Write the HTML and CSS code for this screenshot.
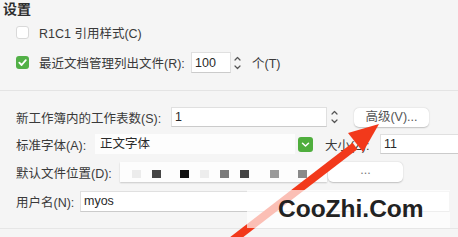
FILE: index.html
```html
<!DOCTYPE html>
<html lang="zh-CN">
<head>
<meta charset="utf-8">
<title>设置</title>
<link rel="stylesheet" href="styles.css">
</head>
<body>
<div class="page">
  <div class="title">设置</div>

  <div class="row r1">
    <span class="cb"></span>
    <span class="text">R1C1 引用样式(C)</span>
  </div>

  <div class="row r2">
    <span class="cb on"><svg viewBox="0 0 13 13" width="13" height="13"><path d="M3.3 6.7 L5.6 9 L9.8 4.2" fill="none" stroke="#fff" stroke-width="1.8" stroke-linecap="round" stroke-linejoin="round"/></svg></span>
    <span class="label l-recent">最近文档管理列出文件(R):</span>
    <span class="field f-recent">100</span>
    <span class="stepper"><svg viewBox="0 0 9 20" width="9" height="20"><path d="M2 7 L4.5 4.5 L7 7 M2 13 L4.5 15.5 L7 13" fill="none" stroke="#555" stroke-width="1.2" stroke-linecap="round" stroke-linejoin="round"/></svg></span>
    <span class="unit">个(T)</span>
  </div>

  <div class="divider"></div>

  <div class="row r3">
    <span class="label l-sheets">新工作簿内的工作表数(S):</span>
    <span class="field f-sheets">1</span>
    <span class="stepper s-sheets"><svg viewBox="0 0 9 20" width="9" height="20"><path d="M2 7 L4.5 4.5 L7 7 M2 13 L4.5 15.5 L7 13" fill="none" stroke="#555" stroke-width="1.2" stroke-linecap="round" stroke-linejoin="round"/></svg></span>
    <span class="btn b-adv">高级(V)...</span>
  </div>

  <div class="row r4">
    <span class="label l-font">标准字体(A):</span>
    <span class="select">正文字体</span>
    <span class="drop"><svg viewBox="0 0 15 15" width="15" height="15"><path d="M4.5 6.2 L7.5 9 L10.5 6.2" fill="none" stroke="#fff" stroke-width="1.5" stroke-linecap="round" stroke-linejoin="round"/></svg></span>
    <span class="label l-size">大小(Z):</span>
    <span class="field f-size">11</span>
  </div>

  <div class="row r5">
    <span class="label l-path">默认文件位置(D):</span>
    <span class="path">
      <span class="sq c1"></span><span class="sq c2"></span><span class="sq c3"></span><span class="sq c4"></span><span class="sq c5"></span><span class="sq c6"></span><span class="sq c7"></span><span class="sq c8"></span>
    </span>
    <span class="btn b-dots">...</span>
  </div>

  <div class="row r6">
    <span class="label l-user">用户名(N):</span>
    <span class="field f-user">myos</span>
  </div>

  <div class="bottom"></div>
</div>

<svg class="arrow" viewBox="0 0 458 237" width="458" height="237">
  <path d="M229 243 L355 146" stroke="#f2391b" stroke-width="8" fill="none"/>
  <polygon points="379,124 348,133 363,152" fill="#f2391b"/>
</svg>

<div class="watermark">CooZhi.Com</div>
</body>
</html>
```

FILE: styles.css
```css
html, body {
  margin: 0;
  padding: 0;
}
body {
  width: 458px;
  height: 237px;
  overflow: hidden;
  background: #f5f5f5;
  font-family: "Liberation Sans", "Noto Sans CJK SC", sans-serif;
  font-size: 12.5px;
  color: #3a3a3a;
  position: relative;
}
.page {
  display: flex;
  flex-direction: column;
}
.title {
  height: 18px;
  line-height: 18px;
  margin-left: 3px;
  font-size: 14px;
  font-weight: bold;
  color: #2e2e2e;
}
.row {
  display: flex;
  align-items: center;
  padding-left: 16px;
  height: 20px;
  white-space: nowrap;
}
.r1 { margin-top: 5px; height: 18px; }
.r2 { margin-top: 11px; height: 21px; }
.divider {
  margin-top: 17px;
  height: 1px;
  background: #e4e4e4;
}
.r3 { margin-top: 16px; }
.r4 { margin-top: 7px; }
.r5 { margin-top: 8px; }
.r6 { margin-top: 9px; }
.bottom {
  margin-top: 17px;
  height: 1px;
  background: #e6e6e6;
}

.cb {
  flex: none;
  width: 13px;
  height: 13px;
  box-sizing: border-box;
  border: 1px solid #d9d9d9;
  border-radius: 3px;
  background: #fff;
  display: flex;
}
.cb.on {
  border: none;
  background: #52b047;
}
.text { margin-left: 10px; }
.label { flex: none; }
.l-recent { margin-left: 10px; width: 152px; }
.l-sheets { width: 155px; }
.l-font { width: 79px; }
.l-size { margin-left: 12px; width: 55px; }
.l-path { width: 104px; }
.l-user { width: 64px; }

.field {
  flex: none;
  box-sizing: border-box;
  height: 20px;
  line-height: 19px;
  background: #fff;
  border: 1px solid #e0e0e0;
  border-bottom-color: #cbcbcb;
  padding-left: 3px;
  color: #2a2a2a;
}
.f-recent { width: 40px; height: 21px; line-height: 20px; }
.f-sheets { width: 156px; }
.f-size { width: 90px; }
.f-user { width: 370px; height: 21px; }

.stepper {
  flex: none;
  width: 9px;
  height: 20px;
  margin-left: 2px;
  display: flex;
}
.s-sheets { margin-left: 3px; }
.unit { margin-left: 10px; }

.btn {
  flex: none;
  box-sizing: border-box;
  width: 75px;
  height: 19px;
  line-height: 19px;
  text-align: center;
  background: #fff;
  border-radius: 5px;
  box-shadow: 0 0.5px 1.5px rgba(0, 0, 0, 0.22);
  color: #555;
}
.b-adv { margin-left: 15px; }
.b-dots { margin-left: 1px; height: 20px; line-height: 16px; color: #777; }

.select {
  flex: none;
  box-sizing: border-box;
  width: 200px;
  height: 20px;
  line-height: 20px;
  padding-left: 5px;
  background: #fdfdfd;
  color: #2a2a2a;
}
.drop {
  flex: none;
  width: 15px;
  height: 15px;
  margin-left: 3px;
  border-radius: 3px;
  background: #4fae3d;
  display: flex;
}

.path {
  flex: none;
  box-sizing: border-box;
  width: 207px;
  height: 20px;
  background: #fdfdfd;
  box-shadow: 0 1px 1.5px rgba(0, 0, 0, 0.18);
  display: flex;
  align-items: flex-end;
  padding-bottom: 4px;
}
.sq {
  flex: none;
  width: 9px;
  height: 8px;
  filter: blur(0.4px);
}
.c1 { margin-left: 12px; background: #ececec; }
.c2 { margin-left: 11px; background: #454545; }
.c3 { margin-left: 19px; background: #111; }
.c4 { margin-left: 11px; background: #ededed; }
.c5 { margin-left: 11px; background: #7a7a7a; }
.c6 { margin-left: 11px; background: #454545; }
.c7 { margin-left: 21px; background: #9a9a9a; }
.c8 { margin-left: 19px; background: #8a8a8a; }

.arrow {
  position: absolute;
  left: 0;
  top: 0;
  pointer-events: none;
}
.watermark {
  position: absolute;
  left: 247px;
  top: 190px;
  width: 203px;
  height: 38px;
  box-sizing: border-box;
  padding-left: 31px;
  line-height: 38px;
  background: rgba(255, 255, 255, 0.68);
  font-family: "Liberation Sans", sans-serif;
  font-weight: bold;
  font-size: 24.5px;
  color: #222;
}
```
